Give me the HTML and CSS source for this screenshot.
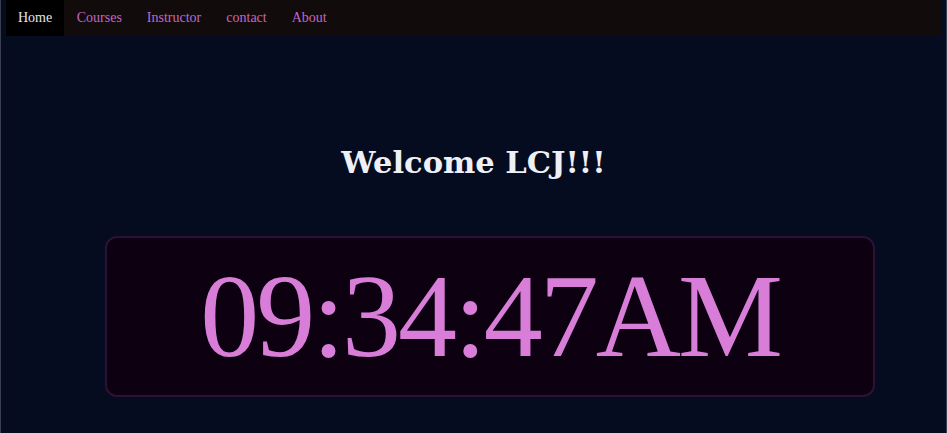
FILE: index.html
```html
<!DOCTYPE html>
<html lang="en">
<head>
<meta charset="utf-8">
<title>Clock</title>
<link rel="stylesheet" href="styles.css">
</head>
<body>
<div class="page">
  <nav class="nav">
    <a class="nav-link active" href="#">Home</a>
    <a class="nav-link" href="#">Courses</a>
    <a class="nav-link" href="#">Instructor</a>
    <a class="nav-link" href="#">contact</a>
    <a class="nav-link" href="#">About</a>
  </nav>
  <h1 class="welcome">Welcome LCJ!!!</h1>
  <div class="clock">09:34:47AM</div>
</div>
</body>
</html>
```
FILE: styles.css
```css
html, body {
  margin: 0;
  padding: 0;
  height: 100%;
}
body {
  background: #060c20;
  border-left: 1px solid #3a3e4e;
  border-right: 1px solid #3a3e4e;
  box-sizing: border-box;
  overflow: hidden;
}
.page {
  padding: 0 5px;
}
.nav {
  display: flex;
  height: 36px;
  background: #120b0b;
  font-family: "Liberation Serif", serif;
  font-size: 14px;
}
.nav-link {
  display: flex;
  align-items: center;
  padding: 0 12.5px;
  color: #c466c8;
  text-decoration: none;
}
.nav-link.active {
  background: #000000;
  color: #e4e4ea;
  padding: 0 12px;
}
.welcome {
  margin: 106px 0 0;
  text-align: center;
  font-family: "DejaVu Serif", serif;
  font-weight: bold;
  font-size: 30.5px;
  line-height: 40px;
  color: #eef0f5;
}
.clock {
  box-sizing: border-box;
  width: 770px;
  height: 161px;
  margin: 54px 0 0 99px;
  border: 2px solid #2c1236;
  border-radius: 12px;
  background: #0d0011;
  display: flex;
  align-items: center;
  justify-content: center;
  font-family: "Liberation Serif", serif;
  font-size: 118px;
  letter-spacing: -3px;
  color: #d87ed8;
}
```
